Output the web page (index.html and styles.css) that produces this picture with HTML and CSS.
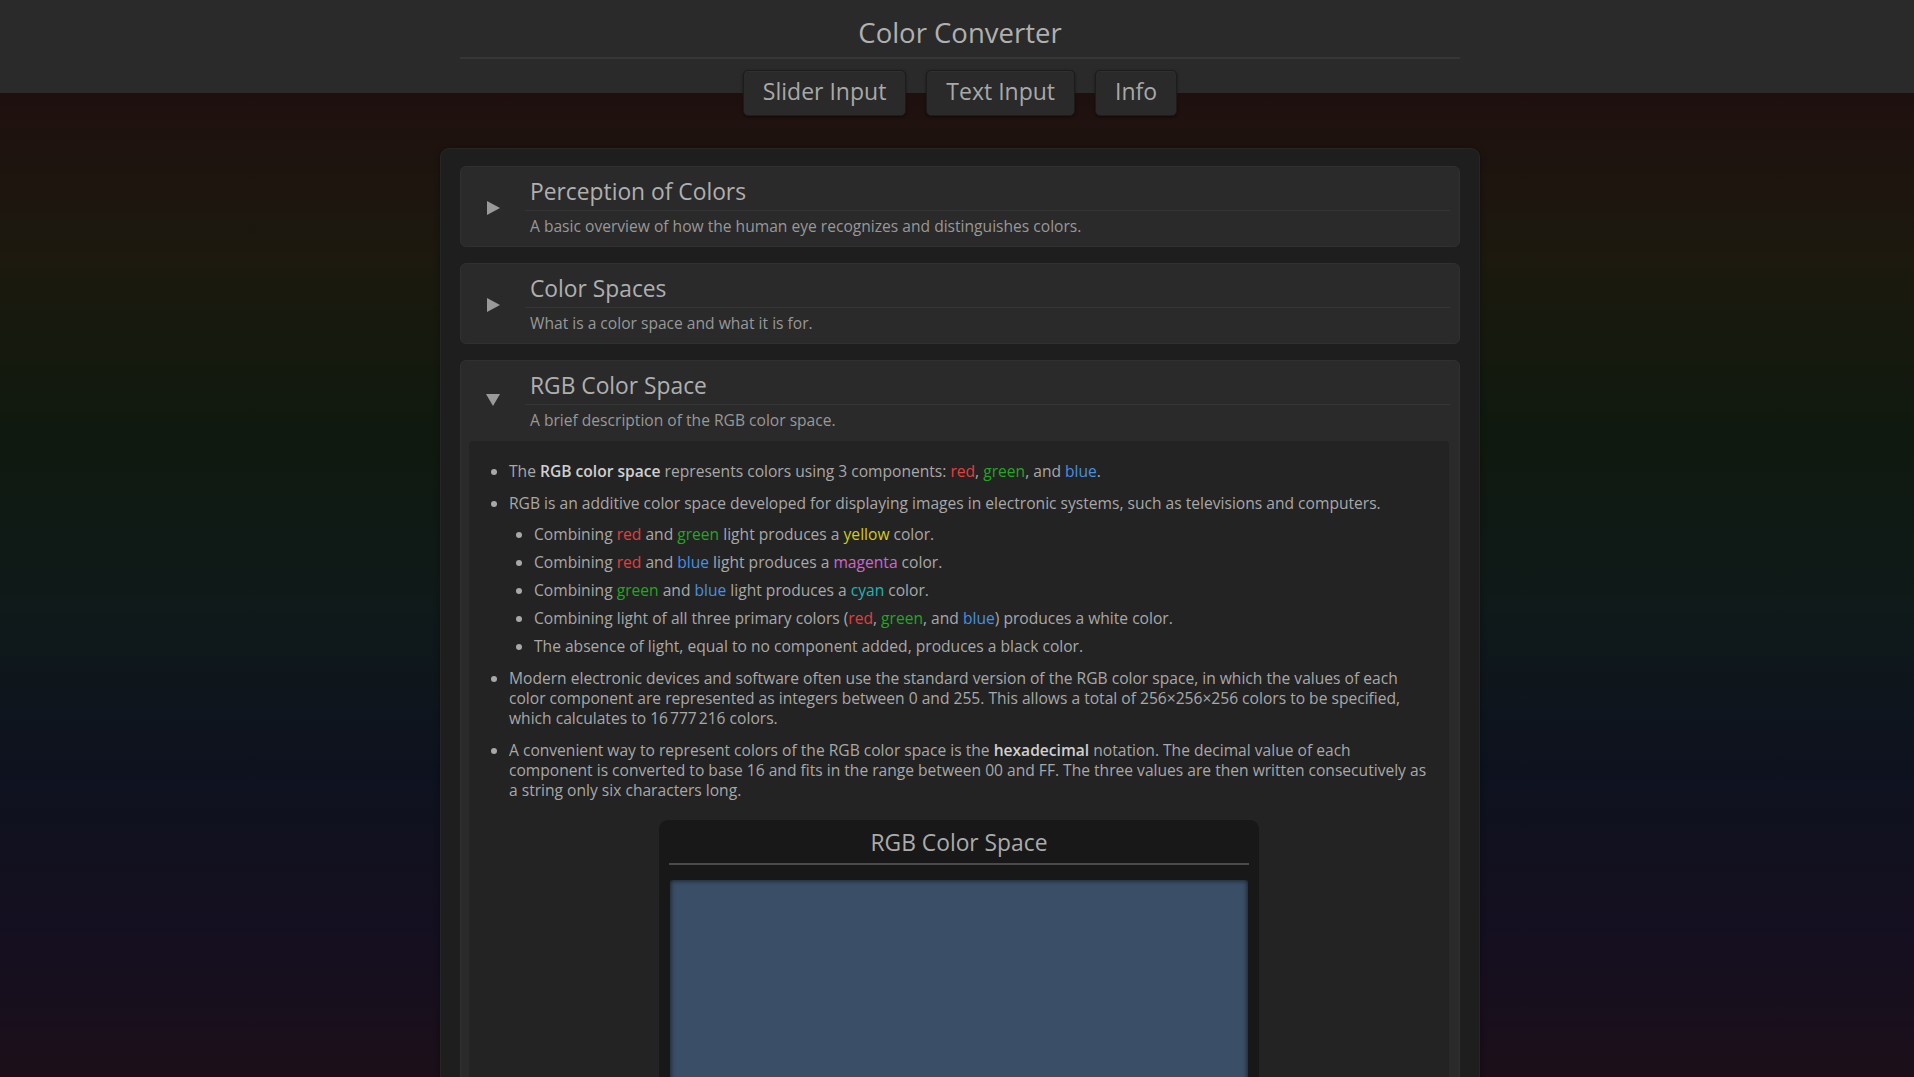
FILE: index.html
```html
<!DOCTYPE html>
<html lang="en">
<head>
<meta charset="utf-8">
<title>Color Converter</title>
<link rel="stylesheet" href="styles.css">
</head>
<body>
<header class="app-header">
  <div class="header-inner">
    <h1 class="app-title">Color Converter</h1>
    <hr class="title-rule">
    <nav class="tabs">
      <button class="tab">Slider Input</button>
      <button class="tab">Text Input</button>
      <button class="tab">Info</button>
    </nav>
  </div>
</header>

<main class="panel">
  <section class="topic">
    <div class="topic-head">
      <span class="arrow arrow-right"></span>
      <div class="topic-text">
        <h2 class="topic-title">Perception of Colors</h2>
        <p class="topic-desc">A basic overview of how the human eye recognizes and distinguishes colors.</p>
      </div>
    </div>
  </section>

  <section class="topic">
    <div class="topic-head">
      <span class="arrow arrow-right"></span>
      <div class="topic-text">
        <h2 class="topic-title">Color Spaces</h2>
        <p class="topic-desc">What is a color space and what it is for.</p>
      </div>
    </div>
  </section>

  <section class="topic topic-open">
    <div class="topic-head">
      <span class="arrow arrow-down"></span>
      <div class="topic-text">
        <h2 class="topic-title">RGB Color Space</h2>
        <p class="topic-desc">A brief description of the RGB color space.</p>
      </div>
    </div>
    <div class="topic-body">
      <ul class="facts">
        <li>The <strong>RGB color space</strong> represents colors using 3 components: <span class="c-red">red</span>, <span class="c-green">green</span>, and <span class="c-blue">blue</span>.</li>
        <li>RGB is an additive color space developed for displaying images in electronic systems, such as televisions and computers.
          <ul class="sub-facts">
            <li>Combining <span class="c-red">red</span> and <span class="c-green">green</span> light produces a <span class="c-yellow">yellow</span> color.</li>
            <li>Combining <span class="c-red">red</span> and <span class="c-blue">blue</span> light produces a <span class="c-magenta">magenta</span> color.</li>
            <li>Combining <span class="c-green">green</span> and <span class="c-blue">blue</span> light produces a <span class="c-cyan">cyan</span> color.</li>
            <li>Combining light of all three primary colors (<span class="c-red">red</span>, <span class="c-green">green</span>, and <span class="c-blue">blue</span>) produces a white color.</li>
            <li>The absence of light, equal to no component added, produces a black color.</li>
          </ul>
        </li>
        <li>Modern electronic devices and software often use the standard version of the RGB color space, in which the values of each color component are represented as integers between 0 and 255. This allows a total of 256×256×256 colors to be specified, which calculates to 16&#8239;777&#8239;216 colors.</li>
        <li>A convenient way to represent colors of the RGB color space is the <strong>hexadecimal</strong> notation. The decimal value of each component is converted to base 16 and fits in the range between 00 and FF. The three values are then written consecutively as a string only six characters long.</li>
      </ul>
      <figure class="chart">
        <h3 class="chart-title">RGB Color Space</h3>
        <hr class="chart-rule">
        <div class="plot"></div>
      </figure>
    </div>
  </section>
</main>
</body>
</html>
```

FILE: styles.css
```css
* { box-sizing: border-box; }

html {
  background: #121212;
}

body {
  margin: 0;
  min-height: 100vh;
  font-family: "Open Sans", "Noto Sans", sans-serif;
  color: #a8a8a8;
  background: linear-gradient(to bottom,
      #1f100f 0px,
      #1f100f 93px,
      #1c190e 260px,
      #10190f 430px,
      #0f1a19 600px,
      #0e121f 770px,
      #150f20 940px,
      #1c0f1a 1077px) fixed;
  padding-bottom: 40px;
}

/* Header */
.app-header {
  background: #2a2a2a;
  height: 93px;
}

.header-inner {
  width: 1000px;
  margin: 0 auto;
  padding-top: 15px;
  transform: translateX(3px);
}

.app-title {
  margin: 0;
  font-size: 27.5px;
  line-height: 36px;
  font-weight: 400;
  text-align: center;
  color: #b0b0b0;
}

.title-rule {
  margin: 6px 0 0;
  border: 0;
  border-top: 2px solid #363636;
}

.tabs {
  display: flex;
  justify-content: center;
  gap: 20px;
  margin-top: 11px;
}

.tab {
  font-family: inherit;
  font-size: 23px;
  line-height: 30px;
  padding: 5px 19px 9px;
  color: #a8a8a8;
  background: #2a2a2a;
  border: 1px solid #1c1c1c;
  border-radius: 5px;
  box-shadow: 0 1px 3px rgba(0, 0, 0, 0.45), inset 0 1px 0 rgba(255, 255, 255, 0.03);
}

/* Main panel */
.panel {
  width: 1040px;
  margin: 55px auto 0;
  transform: translateX(3px);
  padding: 17px 19px 0;
  background: #1e1e1e;
  border: 1px solid #262626;
  border-radius: 9px;
  box-shadow: 0 0 6px rgba(0, 0, 0, 0.35);
}

.topic {
  background: #2a2a2a;
  border: 1px solid #303030;
  border-radius: 6px;
  margin-bottom: 16px;
}

.topic-head {
  display: grid;
  grid-template-columns: 64px 1fr;
  align-items: center;
  padding: 7px 9px 8px 0;
}

.arrow {
  justify-self: center;
  width: 0;
  height: 0;
}

.arrow-right {
  margin-top: 3px;
  border-left: 13px solid #9a9a9a;
  border-top: 7px solid transparent;
  border-bottom: 7px solid transparent;
}

.arrow-down {
  border-top: 12px solid #9a9a9a;
  border-left: 7.5px solid transparent;
  border-right: 7.5px solid transparent;
}

.topic-title {
  margin: 0;
  padding: 1px 5px 1px;
  font-size: 22.8px;
  line-height: 34px;
  font-weight: 400;
  color: #afafaf;
  border-bottom: 1px solid #353535;
}

.topic-desc {
  margin: 3px 0 0;
  padding-left: 5px;
  font-size: 15.6px;
  line-height: 24px;
  color: #989898;
}

.topic-open .topic-head {
  padding-bottom: 9px;
}

.topic-body {
  margin: 0 10px 0 8px;
  padding: 20px 15px 0;
  background: #232323;
  border-radius: 4px 4px 0 0;
  font-size: 15.6px;
  line-height: 20px;
  color: #a8a8a8;
}

.facts {
  margin: 0;
  padding-left: 25px;
  list-style: disc;
}

.facts > li + li {
  margin-top: 12px;
}

.sub-facts {
  margin: 11px 0 0;
  padding-left: 25px;
  list-style: disc;
}

.sub-facts > li + li {
  margin-top: 8px;
}

.facts strong {
  font-weight: 600;
  color: #cfcfcf;
}

.c-red { color: #e53e3e; }
.c-green { color: #24a524; }
.c-blue { color: #4a8fe0; }
.c-yellow { color: #d2cc1c; }
.c-magenta { color: #cf66cf; }
.c-cyan { color: #22b4b4; }

/* Chart */
.chart {
  width: 600px;
  margin: 20px auto 0;
  padding: 8px 10px 0;
  background: #181818;
  border-radius: 9px;
}

.chart-title {
  margin: 0;
  font-size: 22.8px;
  line-height: 30px;
  font-weight: 400;
  text-align: center;
  color: #ababab;
}

.chart-rule {
  margin: 5px 0 0;
  border: 0;
  border-top: 2px solid #4a4a4a;
}

.plot {
  margin: 15px 1px 0;
  height: 420px;
  background: #3a4e68;
  border-radius: 3px;
  box-shadow: inset 0 0 4px 1px rgba(0, 0, 0, 0.55);
}
```
